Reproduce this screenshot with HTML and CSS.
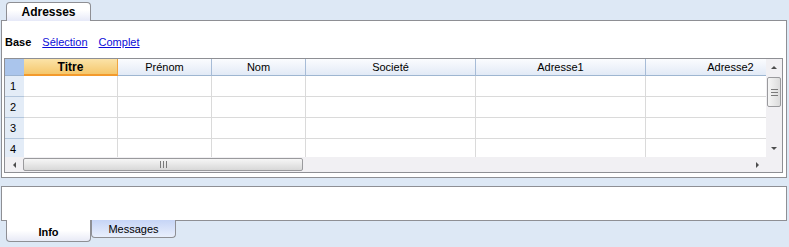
FILE: index.html
```html
<!DOCTYPE html>
<html lang="fr">
  <head>
    <meta charset="UTF-8" />
    <title>Adresses</title>
    <link rel="stylesheet" href="styles.css">
  </head>
  <body>
    <div class="top-tabs">
      <div class="tab tab-top">Adresses</div>
    </div>
    <div class="panel">
      <div class="views">
        <b>Base</b>
        <a href="#">Sélection</a>
        <a href="#">Complet</a>
      </div>
      <div class="grid">
        <div class="sheet">
          <div class="row head">
            <div class="corner"></div>
            <div class="hc narrow sel">Titre</div>
            <div class="hc narrow">Prénom</div>
            <div class="hc narrow">Nom</div>
            <div class="hc wide">Societé</div>
            <div class="hc wide">Adresse1</div>
            <div class="hc wide">Adresse2</div>
          </div>
          <div class="row">
            <div class="rn">1</div>
            <div class="c narrow"></div><div class="c narrow"></div><div class="c narrow"></div>
            <div class="c wide"></div><div class="c wide"></div><div class="c wide"></div>
          </div>
          <div class="row">
            <div class="rn">2</div>
            <div class="c narrow"></div><div class="c narrow"></div><div class="c narrow"></div>
            <div class="c wide"></div><div class="c wide"></div><div class="c wide"></div>
          </div>
          <div class="row">
            <div class="rn">3</div>
            <div class="c narrow"></div><div class="c narrow"></div><div class="c narrow"></div>
            <div class="c wide"></div><div class="c wide"></div><div class="c wide"></div>
          </div>
          <div class="row">
            <div class="rn">4</div>
            <div class="c narrow"></div><div class="c narrow"></div><div class="c narrow"></div>
            <div class="c wide"></div><div class="c wide"></div><div class="c wide"></div>
          </div>
        </div>
        <div class="vscroll">
          <div class="btn"><span class="arr up"></span></div>
          <div class="vthumb"><span class="grip-h"></span></div>
          <div class="track"></div>
          <div class="btn"><span class="arr down"></span></div>
        </div>
        <div class="hscroll">
          <div class="btn"><span class="arr left"></span></div>
          <div class="hthumb"><span class="grip-v"></span></div>
          <div class="track"></div>
          <div class="btn"><span class="arr right"></span></div>
        </div>
        <div class="sizer"></div>
      </div>
    </div>
    <div class="info-panel"></div>
    <div class="bottom-tabs">
      <div class="tab tab-bottom active">Info</div>
      <div class="tab tab-bottom">Messages</div>
    </div>
  </body>
</html>
```

FILE: styles.css
```css
body {
  margin: 0;
  background-color: #dde8f5;
  font-family: "Liberation Sans", Arial, sans-serif;
  font-size: 11px;
  color: #000;
  width: 789px;
  height: 247px;
  overflow: hidden;
}
.top-tabs {
  display: flex;
  padding: 2px 0 0 6px;
  height: 18px;
}
.tab {
  width: 85px;
  box-sizing: border-box;
  border: 1px solid #8e8f94;
  text-align: center;
}
.tab-top {
  height: 19px;
  border-bottom: none;
  border-radius: 4px 4px 0 0;
  background: linear-gradient(#ffffff 40%, #e6e9f8);
  font-weight: bold;
  font-size: 12px;
  line-height: 18px;
  position: relative;
  z-index: 1;
}
.panel {
  margin: 0 2px 0 1px;
  height: 158px;
  box-sizing: border-box;
  border: 1px solid #8e8f94;
  background-color: #fff;
}
.views {
  height: 37px;
  padding-left: 3px;
  line-height: 43px;
  display: flex;
  gap: 11px;
}
.views a {
  color: #0c0cd8;
  text-decoration: underline;
}
.grid {
  margin: 0 3px 0 2px;
  border: 1px solid #8e8f94;
  display: grid;
  grid-template-columns: 1fr 16px;
  grid-template-rows: 98px 15px;
}
.sheet {
  overflow: hidden;
}
.row {
  display: flex;
  height: 21px;
  box-sizing: border-box;
}
.row.head {
  height: 17px;
}
.corner {
  flex: 0 0 19px;
  background-color: #aac5ec;
  border-bottom: 1px solid #9bb3d1;
}
.narrow {
  flex: 0 0 94px;
}
.wide {
  flex: 0 0 170px;
}
.hc {
  box-sizing: border-box;
  background: linear-gradient(#fbfcfe, #e2eaf6);
  border-right: 1px solid #a7bcd7;
  border-bottom: 1px solid #9eb6d1;
  text-align: center;
  line-height: 17px;
}
.hc.sel {
  background: linear-gradient(#fbe3a8, #f5c76c);
  border-right-color: #f0a540;
  border-bottom: 2px solid #f39a2c;
  font-weight: bold;
  font-size: 12px;
  line-height: 16px;
}
.rn {
  flex: 0 0 19px;
  box-sizing: border-box;
  background-color: #e3ecf7;
  border-bottom: 1px solid #b3c6dc;
  padding-left: 5px;
  line-height: 21px;
}
.c {
  box-sizing: border-box;
  border-right: 1px solid #dadada;
  border-bottom: 1px solid #dadada;
}
.vscroll {
  background-color: #f1f0f3;
  display: flex;
  flex-direction: column;
}
.vscroll .btn {
  height: 17px;
  display: flex;
  align-items: center;
  justify-content: center;
}
.vthumb {
  height: 30px;
  margin: 1px 1px 0 1px;
  box-sizing: border-box;
  border: 1px solid #9a9a9d;
  border-radius: 2px;
  background: linear-gradient(90deg, #f6f6f6, #dcdcdc);
  display: flex;
  align-items: center;
  justify-content: center;
}
.track {
  flex: 1;
}
.hscroll {
  background-color: #f1f0f3;
  display: flex;
}
.hscroll .btn {
  width: 18px;
  display: flex;
  align-items: center;
  justify-content: center;
}
.hthumb {
  width: 280px;
  margin: 1px 0;
  box-sizing: border-box;
  border: 1px solid #9a9a9d;
  border-radius: 2px;
  background: linear-gradient(#f6f6f6, #d8d8d8);
  display: flex;
  align-items: center;
  justify-content: center;
}
.sizer {
  background-color: #f1f0f3;
}
.arr {
  width: 0;
  height: 0;
  border-style: solid;
  border-color: transparent;
}
.arr.up {
  border-width: 0 3px 3px 3px;
  border-bottom-color: #4d4d4d;
}
.arr.down {
  border-width: 3px 3px 0 3px;
  border-top-color: #4d4d4d;
}
.arr.left {
  border-width: 3px 3px 3px 0;
  border-right-color: #4d4d4d;
}
.arr.right {
  border-width: 3px 0 3px 3px;
  border-left-color: #4d4d4d;
}
.grip-h {
  width: 7px;
  height: 7px;
  background: repeating-linear-gradient(#7a7a7a 0 1px, transparent 1px 3px);
}
.grip-v {
  width: 7px;
  height: 7px;
  background: repeating-linear-gradient(90deg, #7a7a7a 0 1px, transparent 1px 3px);
}
.info-panel {
  margin: 8px 2px 0 1px;
  height: 35px;
  box-sizing: border-box;
  border: 1px solid #8e8f94;
  background-color: #fff;
}
.bottom-tabs {
  display: flex;
  padding-left: 6px;
  margin-top: -1px;
  align-items: flex-start;
}
.tab-bottom {
  height: 18px;
  border-top: none;
  border-radius: 0 0 4px 4px;
  background: linear-gradient(#c6d5f6, #e9effc);
  line-height: 19px;
}
.tab-bottom.active {
  height: 22px;
  background: linear-gradient(#ffffff 50%, #e8eaf6);
  font-weight: bold;
  line-height: 24px;
  position: relative;
  z-index: 1;
}
```
